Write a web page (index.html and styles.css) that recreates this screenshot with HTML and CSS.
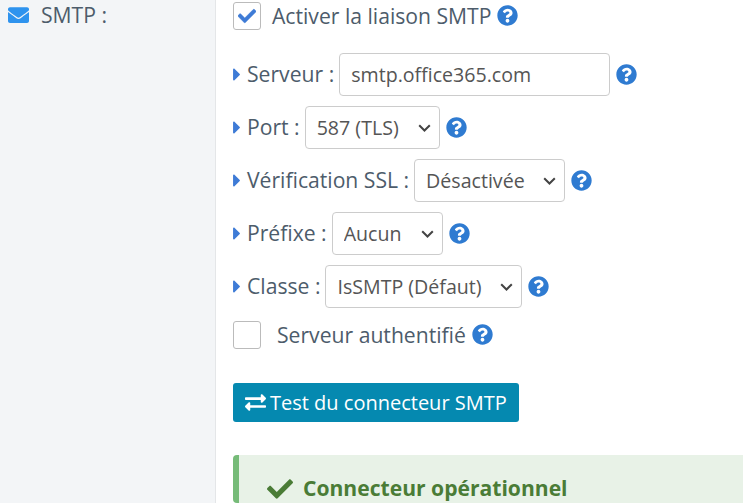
FILE: index.html
```html
<!DOCTYPE html>
<html lang="fr">
<head>
<meta charset="utf-8">
<title>SMTP</title>
<link rel="stylesheet" href="styles.css">
</head>
<body>
<svg class="defs" width="0" height="0" aria-hidden="true">
  <symbol id="q" viewBox="0 0 512 512"><path d="M504 256c0 136.997-111.043 248-248 248S8 392.997 8 256C8 119.083 119.043 8 256 8s248 111.083 248 248zM262.655 90c-54.497 0-89.255 22.957-116.549 63.758-3.536 5.286-2.353 12.415 2.715 16.258l34.699 26.31c5.205 3.947 12.621 3.008 16.665-2.122 17.864-22.658 30.113-35.797 57.303-35.797 20.429 0 45.698 13.148 45.698 32.958 0 14.976-12.363 22.667-32.534 33.976C247.128 238.528 216 254.941 216 296v4c0 6.627 5.373 12 12 12h56c6.627 0 12-5.373 12-12v-1.333c0-28.462 83.186-29.647 83.186-106.667 0-58.002-60.165-102-116.531-102zM256 338c-25.365 0-46 20.635-46 46 0 25.364 20.635 46 46 46s46-20.636 46-46c0-25.365-20.635-46-46-46z"/></symbol>
  <symbol id="caret" viewBox="0 0 192 512"><path d="M0 384.662V127.338c0-17.818 21.543-26.741 34.142-14.142l128.662 128.662c7.81 7.81 7.81 20.474 0 28.284L34.142 398.804C21.543 411.404 0 402.48 0 384.662z"/></symbol>
  <symbol id="check" viewBox="0 0 512 512"><path d="M173.898 439.404l-166.4-166.4c-9.997-9.997-9.997-26.206 0-36.204l36.203-36.204c9.997-9.998 26.207-9.998 36.204 0L192 312.69 432.095 72.596c9.997-9.997 26.207-9.997 36.204 0l36.203 36.204c9.997 9.997 9.997 26.206 0 36.204l-294.4 294.401c-9.998 9.997-26.207 9.997-36.204-.001z"/></symbol>
</svg>
<div class="layout">
  <aside class="side">
    <svg class="mail" viewBox="0 0 512 512"><path d="M502.3 190.8c3.9-3.1 9.7-.2 9.7 4.7V400c0 26.5-21.5 48-48 48H48c-26.5 0-48-21.5-48-48V195.6c0-5 5.7-7.8 9.7-4.7 22.4 17.4 52.1 39.5 154.1 113.6 21.1 15.4 56.7 47.8 92.2 47.6 35.7.3 72-32.8 92.3-47.6 102-74.1 131.6-96.3 154-113.7zM256 320c23.2.4 56.6-29.2 73.4-41.4 132.7-96.3 142.8-104.7 173.4-128.7 5.8-4.5 9.2-11.5 9.2-18.9v-19c0-26.5-21.5-48-48-48H48C21.5 64 0 85.5 0 112v19c0 7.4 3.4 14.3 9.2 18.9 30.6 23.9 40.7 32.4 173.4 128.7 16.8 12.2 50.2 41.8 73.4 41.4z"/></svg>
    <span>SMTP :</span>
  </aside>
  <main class="main">
    <div class="check-row first">
      <span class="box"><svg class="tick" viewBox="0 0 512 512"><use href="#check"/></svg></span>
      <span class="check-label">Activer la liaison SMTP</span>
      <svg class="help"><use href="#q"/></svg>
    </div>
    <div class="field field-first">
      <svg class="caret"><use href="#caret"/></svg>
      <label class="lab">Serveur :</label>
      <input class="ctl in" type="text" value="smtp.office365.com">
      <svg class="help"><use href="#q"/></svg>
    </div>
    <div class="field">
      <svg class="caret"><use href="#caret"/></svg>
      <label class="lab">Port :</label>
      <select class="ctl sel s-port"><option>587 (TLS)</option></select>
      <svg class="help"><use href="#q"/></svg>
    </div>
    <div class="field">
      <svg class="caret"><use href="#caret"/></svg>
      <label class="lab">Vérification SSL :</label>
      <select class="ctl sel s-ssl"><option>Désactivée</option></select>
      <svg class="help"><use href="#q"/></svg>
    </div>
    <div class="field">
      <svg class="caret"><use href="#caret"/></svg>
      <label class="lab">Préfixe :</label>
      <select class="ctl sel s-pre"><option>Aucun</option></select>
      <svg class="help"><use href="#q"/></svg>
    </div>
    <div class="field">
      <svg class="caret"><use href="#caret"/></svg>
      <label class="lab">Classe :</label>
      <select class="ctl sel s-cls"><option>IsSMTP (Défaut)</option></select>
      <svg class="help"><use href="#q"/></svg>
    </div>
    <div class="check-row auth">
      <span class="box"></span>
      <span class="check-label wide">Serveur authentifié</span>
      <svg class="help"><use href="#q"/></svg>
    </div>
    <button class="btn" type="button">
      <svg class="swap" viewBox="0 0 512 512"><path d="M0 168v-16c0-13.255 10.745-24 24-24h360V80c0-21.367 25.899-32.042 40.971-16.971l80 80c9.372 9.373 9.372 24.569 0 33.941l-80 80C409.956 271.982 384 261.456 384 240v-48H24c-13.255 0-24-10.745-24-24zm488 152H128v-48c0-21.314-25.862-32.08-40.971-16.971l-80 80c-9.372 9.373-9.372 24.569 0 33.941l80 80C102.057 463.997 128 453.437 128 432v-48h360c13.255 0 24-10.745 24-24v-16c0-13.255-10.745-24-24-24z"/></svg>
      <span>Test du connecteur SMTP</span>
    </button>
    <div class="alert">
      <svg class="ok" viewBox="0 0 512 512"><use href="#check"/></svg>
      <strong>Connecteur opérationnel</strong>
    </div>
  </main>
</div>
</body>
</html>
```
FILE: styles.css
```css
* { box-sizing: border-box; }
html, body { margin: 0; height: 100%; overflow: hidden; background: #fff; }
body { font-family: "Open Sans", sans-serif; font-size: 21.15px; color: #4d5c6b; }
.defs { position: absolute; }
.layout { display: flex; height: 503px; overflow: hidden; }
.side {
  width: 216px; flex: none; background: #f3f5f7; border-right: 1px solid #e4e6e8;
  display: flex; align-items: flex-start; gap: 12px; padding: 3px 0 0 8px;
  line-height: 24px;
}
.mail { width: 21px; height: 24px; fill: #2e93ee; flex: none; }
.main { flex: 1; padding: 2px 0 0 17px; min-width: 0; }
.check-row { display: flex; align-items: center; height: 28px; }
.box {
  width: 28px; height: 28px; flex: none; border: 1px solid #bbb; border-radius: 3px;
  display: flex; align-items: center; justify-content: center; background: #fff;
}
.tick { width: 18px; height: 18px; fill: #3e7bd6; stroke: #3e7bd6; stroke-width: 14; }
.check-label { margin-left: 11px; margin-right: 6px; margin-bottom: 2px; }
.check-label.wide { margin-left: 16px; }
.help { width: 21px; height: 21px; fill: #2f7bd1; flex: none; margin-bottom: 1px; }
.field { display: flex; align-items: center; height: 43px; margin-bottom: 10px; }
.field-first { margin-top: 23px; }
.caret { width: 8px; height: 21px; fill: #3e7bd6; flex: none; margin-right: 6px; }
.lab { margin-right: 5px; margin-bottom: 2px; white-space: nowrap; }
.ctl {
  height: 43px; border: 1px solid #ccc; border-radius: 4px; background: #fff;
  font-family: "Open Sans", sans-serif; font-size: 19.6px; color: #555;
  padding: 0 11px; margin-right: 6px; flex: none;
}
.sel {
  appearance: none; -webkit-appearance: none;
  background: #fff url("data:image/svg+xml,%3Csvg xmlns='http://www.w3.org/2000/svg' width='13' height='8' viewBox='0 0 13 8'%3E%3Cpath d='M1.2 1.2l5.3 5.3 5.3-5.3' fill='none' stroke='%23444' stroke-width='2'/%3E%3C/svg%3E") no-repeat right 8px center;
}
.in { width: 271px; }
.s-port { width: 135px; }
.s-ssl { width: 151px; }
.s-pre { width: 111px; }
.s-cls { width: 197px; }
.auth { margin-top: 13px; }
.btn {
  display: flex; align-items: center; gap: 4px; margin-top: 34px; height: 39px; width: 286px;
  background: #0589b0; color: #fff; border: 0; border-radius: 3px; padding: 0 12px;
  font-family: "Open Sans", sans-serif; font-size: 20px;
}
.swap { width: 21px; height: 21px; fill: #fff; flex: none; }
.alert {
  margin-top: 33px; width: 560px; height: 48px; background: #e8f2e7; border-left: 6px solid #76bb78;
  border-radius: 4px 0 0 4px; padding: 19px 0 0 28px; display: flex; align-items: flex-start; gap: 10px;
  color: #4a7c36; font-size: 21.1px; line-height: 28px;
}
.ok { width: 26px; height: 26px; fill: #4a7c36; flex: none; margin-top: 2px; }
```
